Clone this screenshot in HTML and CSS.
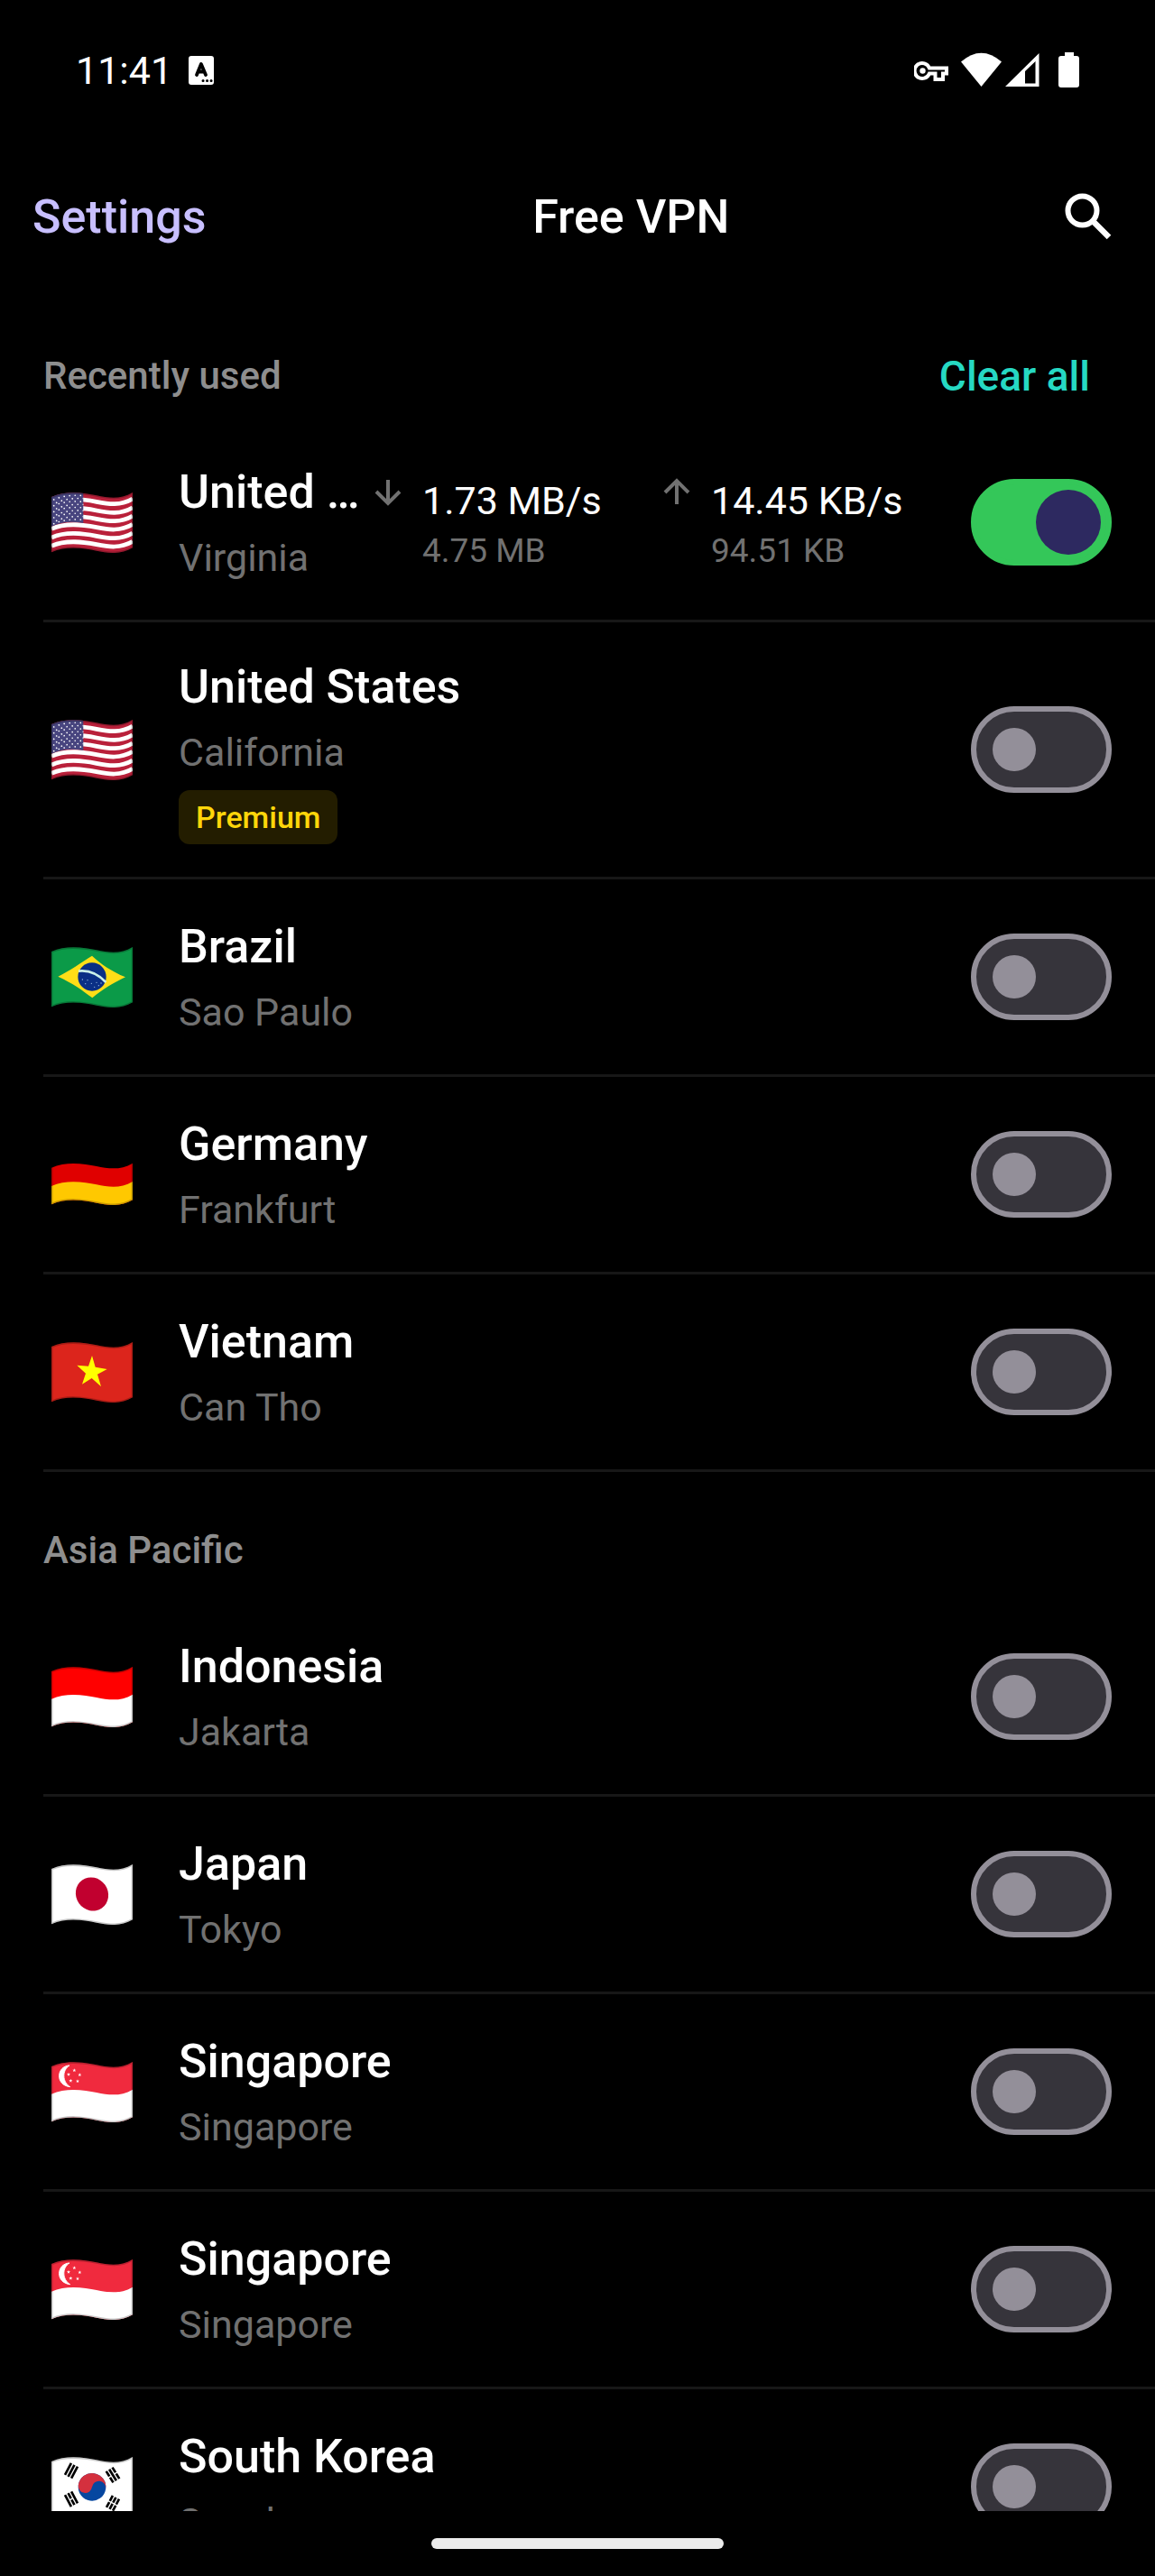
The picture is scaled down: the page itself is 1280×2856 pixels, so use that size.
FILE: index.html
```html
<!DOCTYPE html>
<html lang="en">
<head>
    <meta charset="UTF-8">
    <meta name="viewport" content="width=device-width, initial-scale=1.0">
    <title>Free VPN</title>
    <link rel="stylesheet" href="styles.css">
</head>
<body>

    <!-- Flag shapes, reused by the rows -->
    <svg class="defs" aria-hidden="true">
        <defs>
            <path id="wave" d="M0 15C50 -8 110 2 150 10S230 24 270 0"/>
            <path id="cloth" d="M0 15C50 -8 110 2 150 10S230 24 270 0V184C230 208 190 202 150 194S50 176 0 199Z"/>
            <clipPath id="clothClip"><use href="#cloth"/></clipPath>
            <clipPath id="cantonClip"><path d="M0 0H107V102C70 95 35 96 0 113Z"/></clipPath>
            <path id="star" d="M0 -10L2.4 -3.2H9.5L3.8 1.2L5.9 8.1L0 4L-5.9 8.1L-3.8 1.2L-9.5 -3.2H-2.4Z"/>
            <g id="edge" fill="none" stroke="#000" stroke-opacity=".22" stroke-width="9">
                <use href="#cloth"/>
            </g>
            <g id="lowerHalf">
                <path d="M0 107C50 84 110 94 150 102S230 116 270 92V210H0Z"/>
            </g>
        </defs>

        <symbol id="flag-us" viewBox="-24 0 318 201">
            <g clip-path="url(#clothClip)">
                <rect width="270" height="201" fill="#b9203a"/>
                <g fill="none" stroke="#fff" stroke-width="14.2">
                    <use href="#wave" y="21"/>
                    <use href="#wave" y="50"/>
                    <use href="#wave" y="78"/>
                    <use href="#wave" y="106"/>
                    <use href="#wave" y="135"/>
                    <use href="#wave" y="163"/>
                </g>
                <g clip-path="url(#cantonClip)">
                    <rect width="107" height="120" fill="#48457f"/>
                    <g fill="none" stroke="#fff" stroke-width="5" stroke-linecap="round" stroke-dasharray="0.1 18">
                        <use href="#wave" x="8" y="9"/>
                        <use href="#wave" x="17" y="19"/>
                        <use href="#wave" x="8" y="29"/>
                        <use href="#wave" x="17" y="39"/>
                        <use href="#wave" x="8" y="49"/>
                        <use href="#wave" x="17" y="59"/>
                        <use href="#wave" x="8" y="69"/>
                        <use href="#wave" x="17" y="79"/>
                        <use href="#wave" x="8" y="89"/>
                    </g>
                </g>
                <use href="#edge"/>
            </g>
        </symbol>

        <symbol id="flag-br" viewBox="-24 0 318 201">
            <g clip-path="url(#clothClip)">
                <rect width="270" height="201" fill="#0b9a48"/>
                <path d="M22 98C60 80 100 50 135 29C165 58 200 80 246 100C210 118 170 140 136 169C105 145 70 120 22 98Z" fill="#ffde17"/>
                <ellipse cx="135" cy="99" rx="47" ry="47" fill="#0a2f85"/>
                <path d="M90 80Q140 74 181 117" fill="none" stroke="#c9efe8" stroke-width="8"/>
                <path d="M103 108h.1M120 110h.1M133 121h.1M150 118h.1M157 128h.1M113 122h.1M143 133h.1M165 120h.1" stroke="#8fb3e0" stroke-width="4" stroke-linecap="round"/>
                <use href="#edge"/>
            </g>
        </symbol>

        <symbol id="flag-de" viewBox="-24 0 318 201">
            <g clip-path="url(#clothClip)">
                <rect width="270" height="201" fill="#000"/>
                <path d="M0 77C50 54 110 64 150 72S230 86 270 62V210H0Z" fill="#e00000"/>
                <path d="M0 138C50 115 110 125 150 133S230 147 270 123V210H0Z" fill="#ffc800"/>
                <use href="#edge"/>
            </g>
        </symbol>

        <symbol id="flag-vn" viewBox="-24 0 318 201">
            <g clip-path="url(#clothClip)">
                <rect width="270" height="201" fill="#dc251c"/>
                <path d="M135 45L146 83L185 90L153 107L165 148L134 120L102 140L114 104L85 77L123 80Z" fill="#ff0"/>
                <use href="#edge"/>
            </g>
        </symbol>

        <symbol id="flag-id" viewBox="-24 0 318 201">
            <g clip-path="url(#clothClip)">
                <rect width="270" height="201" fill="#f00"/>
                <use href="#lowerHalf" fill="#fff"/>
                <use href="#edge"/>
            </g>
        </symbol>

        <symbol id="flag-jp" viewBox="-24 0 318 201">
            <g clip-path="url(#clothClip)">
                <rect width="270" height="201" fill="#fff"/>
                <ellipse cx="135" cy="99" rx="53" ry="57" transform="rotate(-35 135 99)" fill="#c1002f"/>
                <use href="#edge"/>
            </g>
        </symbol>

        <symbol id="flag-sg" viewBox="-24 0 318 201">
            <g clip-path="url(#clothClip)">
                <rect width="270" height="201" fill="#f02a3e"/>
                <use href="#lowerHalf" fill="#fff"/>
                <path d="M60 12C16 14 12 78 62 83C36 68 34 28 60 12Z" fill="#fff" stroke="#fff" stroke-width="3"/>
                <g fill="#fff">
                    <use href="#star" transform="translate(76 28) scale(.65)"/>
                    <use href="#star" transform="translate(57 42) scale(.65)"/>
                    <use href="#star" transform="translate(94 43) scale(.65)"/>
                    <use href="#star" transform="translate(64 63) scale(.65)"/>
                    <use href="#star" transform="translate(87 64) scale(.65)"/>
                </g>
                <use href="#edge"/>
            </g>
        </symbol>

        <symbol id="flag-kr" viewBox="-24 0 318 201">
            <g clip-path="url(#clothClip)">
                <rect width="270" height="201" fill="#fff"/>
                <g transform="rotate(8 135 100)">
                    <circle cx="135" cy="100" r="46" fill="#0647a0"/>
                    <path d="M89 100A46 46 0 0 1 181 100A23 23 0 0 0 135 100A23 23 0 0 1 89 100Z" fill="#d4303e"/>
                </g>
                <g fill="none" stroke="#000" stroke-width="8">
                    <path transform="translate(66 46) rotate(28)" d="M-12 -22V22M0 -22V22M12 -22V22"/>
                    <path transform="translate(204 60) rotate(-32)" d="M-12 -22V-2M-12 2V22M0 -22V22M12 -22V-2M12 2V22"/>
                    <path transform="translate(66 140) rotate(-28)" d="M-12 -22V22M0 -22V-2M0 2V22M12 -22V22"/>
                    <path transform="translate(204 154) rotate(28)" d="M-12 -22V-2M-12 2V22M0 -22V-2M0 2V22M12 -22V-2M12 2V22"/>
                </g>
                <use href="#edge"/>
            </g>
        </symbol>
    </svg>

    <!-- Status Bar -->
    <div class="status-bar">
        <span class="clock">11:41</span>
        <svg class="input-icon" viewBox="0 0 28 32">
            <rect width="28" height="32" rx="3" fill="#fff"/>
            <path d="M9 21L13.900 9L19 21M11 17.500H17" fill="none" stroke="#000" stroke-width="3.800" stroke-linecap="round" stroke-linejoin="round"/>
            <path d="M16 27.500h.1M20.500 27.500h.1M25 27.500h.1" stroke="#000" stroke-width="3" stroke-linecap="round"/>
        </svg>
        <div class="status-icons">
            <svg width="48" height="40" viewBox="0 0 48 40">
                <path d="M17 17.500A8.500 8.500 0 1 0 17 23.500H23.500V30H32V23.500H36V17.500Z" fill="none" stroke="#fff" stroke-width="4"/>
                <circle cx="9.500" cy="20.500" r="3.200" fill="#fff"/>
            </svg>
            <svg width="45" height="40" viewBox="0 0 45 40">
                <path d="M0 10.500Q22.500 -9 45 10.500L22.500 38Z" fill="#fff"/>
            </svg>
            <svg width="55" height="40" viewBox="0 0 55 40">
                <path d="M0 38L37.500 1V38ZM22 21V34.500H33.500V10Z" fill="#fff" fill-rule="evenodd"/>
            </svg>
            <svg width="23" height="40" viewBox="0 0 23 40">
                <path d="M7 0H17V4H20Q23 4 23 7V36Q23 39 20 39H3Q0 39 0 36V7Q0 4 3 4H7Z" fill="#fff"/>
            </svg>
        </div>
    </div>

    <!-- Top Bar -->
    <header>
        <a href="#" class="settings">Settings</a>
        <h1>Free VPN</h1>
        <button type="button" class="search-btn" aria-label="Search">
            <svg viewBox="0 0 52 52">
                <circle cx="19.500" cy="19.500" r="16" fill="none" stroke="#fff" stroke-width="6"/>
                <path d="M31 31L49 49" fill="none" stroke="#fff" stroke-width="6.500"/>
            </svg>
        </button>
    </header>

    <!-- Server List -->
    <main>
        <section>
            <div class="section-head">
                <h2>Recently used</h2>
                <button type="button" class="clear-btn">Clear all</button>
            </div>

            <div class="server">
                <svg class="flag"><use href="#flag-us"/></svg>
                <div class="place">
                    <label for="us-virginia">United States</label>
                    <p>Virginia</p>
                </div>
                <div class="stat">
                    <svg class="arrow" viewBox="0 0 44 44"><path d="M22 9V34M9 22L22 35L35 22"/></svg>
                    <div>
                        <p class="speed">1.73 MB/s</p>
                        <p class="total">4.75 MB</p>
                    </div>
                </div>
                <div class="stat">
                    <svg class="arrow" viewBox="0 0 44 44"><path d="M22 36V11M9 23L22 10L35 23"/></svg>
                    <div>
                        <p class="speed">14.45 KB/s</p>
                        <p class="total">94.51 KB</p>
                    </div>
                </div>
                <input type="checkbox" class="toggle" id="us-virginia" checked>
            </div>

            <div class="server">
                <svg class="flag"><use href="#flag-us"/></svg>
                <div class="place">
                    <label for="us-california">United States</label>
                    <p>California</p>
                    <span class="badge">Premium</span>
                </div>
                <input type="checkbox" class="toggle" id="us-california">
            </div>

            <div class="server">
                <svg class="flag"><use href="#flag-br"/></svg>
                <div class="place">
                    <label for="brazil">Brazil</label>
                    <p>Sao Paulo</p>
                </div>
                <input type="checkbox" class="toggle" id="brazil">
            </div>

            <div class="server">
                <svg class="flag"><use href="#flag-de"/></svg>
                <div class="place">
                    <label for="germany">Germany</label>
                    <p>Frankfurt</p>
                </div>
                <input type="checkbox" class="toggle" id="germany">
            </div>

            <div class="server">
                <svg class="flag"><use href="#flag-vn"/></svg>
                <div class="place">
                    <label for="vietnam">Vietnam</label>
                    <p>Can Tho</p>
                </div>
                <input type="checkbox" class="toggle" id="vietnam">
            </div>
        </section>

        <section>
            <div class="section-head">
                <h2>Asia Pacific</h2>
            </div>

            <div class="server">
                <svg class="flag"><use href="#flag-id"/></svg>
                <div class="place">
                    <label for="indonesia">Indonesia</label>
                    <p>Jakarta</p>
                </div>
                <input type="checkbox" class="toggle" id="indonesia">
            </div>

            <div class="server">
                <svg class="flag"><use href="#flag-jp"/></svg>
                <div class="place">
                    <label for="japan">Japan</label>
                    <p>Tokyo</p>
                </div>
                <input type="checkbox" class="toggle" id="japan">
            </div>

            <div class="server">
                <svg class="flag"><use href="#flag-sg"/></svg>
                <div class="place">
                    <label for="singapore-1">Singapore</label>
                    <p>Singapore</p>
                </div>
                <input type="checkbox" class="toggle" id="singapore-1">
            </div>

            <div class="server">
                <svg class="flag"><use href="#flag-sg"/></svg>
                <div class="place">
                    <label for="singapore-2">Singapore</label>
                    <p>Singapore</p>
                </div>
                <input type="checkbox" class="toggle" id="singapore-2">
            </div>

            <div class="server">
                <svg class="flag"><use href="#flag-kr"/></svg>
                <div class="place">
                    <label for="south-korea">South Korea</label>
                    <p>Seoul</p>
                </div>
                <input type="checkbox" class="toggle" id="south-korea">
            </div>
        </section>
    </main>

    <!-- Gesture Bar -->
    <div class="nav-bar"><span></span></div>

</body>
</html>
```
FILE: styles.css
```css
* {
    box-sizing: border-box;
}

body {
    display: flex;
    flex-direction: column;
    height: 100vh;
    margin: 0;
    background-color: #000;
    color: #fff;
    font-family: Roboto, "Liberation Sans", sans-serif;
    font-size: 43px;
}

h1, h2, p {
    margin: 0;
}

button {
    padding: 0;
    border: none;
    background: none;
    font-family: inherit;
    cursor: pointer;
}

.defs {
    position: absolute;
    width: 0;
    height: 0;
}

/* Status Bar */
.status-bar {
    display: flex;
    align-items: center;
    flex-shrink: 0;
    height: 156px;
    padding: 0 84px;
}

.input-icon {
    width: 28px;
    height: 32px;
    margin-left: 18px;
}

.status-icons {
    display: flex;
    gap: 4px;
    margin-left: auto;
}

/* Top Bar */
header {
    display: flex;
    justify-content: space-between;
    align-items: center;
    flex-shrink: 0;
    height: 168px;
    padding: 0 48px 0 36px;
}

h1 {
    font-size: 52px;
    font-weight: 500;
}

.settings {
    color: #c8bfff;
    font-size: 52px;
    font-weight: 500;
    text-decoration: none;
}

.search-btn {
    padding-left: 10px;
}

.search-btn svg {
    display: block;
    width: 52px;
    height: 52px;
}

/* Server List */
main {
    flex: 1;
    min-height: 0;
    padding-top: 6px;
    overflow-y: auto;
    scrollbar-width: none;
}

.section-head {
    display: flex;
    justify-content: space-between;
    align-items: center;
    height: 141px;
    padding: 32px 72px 0 48px;
}

h2 {
    color: #8e8e8e;
    font-size: 42px;
    font-weight: 500;
}

.clear-btn {
    color: #26d9c3;
    font-size: 46px;
    font-weight: 500;
}

.server {
    display: flex;
    align-items: center;
    margin-left: 48px;
    padding: 33px 48px 33px 0;
    min-height: 219px;
    border-bottom: 3px solid #171717;
}

.flag {
    flex-shrink: 0;
    width: 108px;
    height: 67px;
    margin-right: 42px;
}

.place {
    flex: 1;
    min-width: 0;
}

.place label {
    display: block;
    overflow: hidden;
    font-size: 52px;
    font-weight: 500;
    line-height: 78px;
    text-overflow: ellipsis;
    white-space: nowrap;
}

.place p {
    color: #717171;
    line-height: 66px;
}

.badge {
    display: block;
    width: fit-content;
    margin: 9px 0 3px;
    padding: 0 19px;
    border-radius: 12px;
    background-color: #231d00;
    color: #ffd60a;
    font-size: 34px;
    font-weight: 500;
    line-height: 60px;
}

/* Traffic */
.stat {
    display: flex;
    flex-shrink: 0;
    gap: 16px;
    width: 320px;
    margin-left: 6px;
}

.stat + .stat {
    margin: 0 28px 0 0;
}

.arrow {
    width: 44px;
    height: 44px;
    fill: none;
    stroke: #717171;
    stroke-width: 4;
}

.speed {
    line-height: 64px;
}

.total {
    color: #717171;
    font-size: 37px;
    line-height: 48px;
}

/* Toggle */
.toggle {
    display: flex;
    align-items: center;
    flex-shrink: 0;
    appearance: none;
    width: 156px;
    height: 96px;
    margin: 0;
    padding: 0 18px;
    border: 6px solid #938f99;
    border-radius: 48px;
    background-color: #36343b;
    cursor: pointer;
}

.toggle::before {
    content: '';
    width: 48px;
    height: 48px;
    border-radius: 50%;
    background-color: #938f99;
}

.toggle:checked {
    justify-content: flex-end;
    padding: 0 6px;
    border-color: #34c759;
    background-color: #34c759;
}

.toggle:checked::before {
    width: 72px;
    height: 72px;
    background-color: #2d2960;
}

/* Gesture Bar */
.nav-bar {
    display: flex;
    justify-content: center;
    align-items: center;
    flex-shrink: 0;
    height: 72px;
}

.nav-bar span {
    width: 324px;
    height: 12px;
    border-radius: 6px;
    background-color: #ebebeb;
}
```
